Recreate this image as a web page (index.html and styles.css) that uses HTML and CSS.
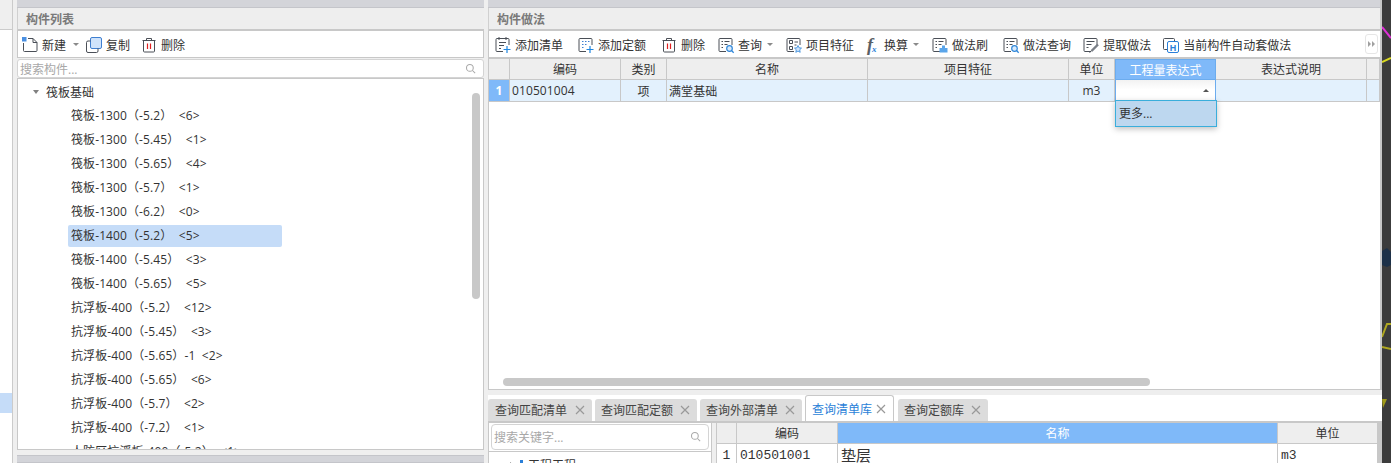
FILE: index.html
```html
<!DOCTYPE html>
<html lang="en">
<head>
    <meta charset="UTF-8">
    <meta name="viewport" content="width=device-width, initial-scale=1.0">
    <title>构件做法</title>
    <link rel="stylesheet" href="styles.css">
</head>
<body>
    <svg class="defs" width="0" height="0">
        <symbol id="i-trash" viewBox="0 0 16 16">
            <path d="M1.5 3.5h13M5.5 3.5V1.500h5v2M2.500 3.500v10.500q0 1 1 1h9q1 0 1-1V3.500" fill="none" stroke="#4a4f57"/>
            <path d="M6.500 6.500v5.500M9.500 6.500v5.500" stroke="#e02020" stroke-width="1.200"/>
        </symbol>
        <symbol id="i-sheet" viewBox="0 0 16 16">
            <path d="M8 14.500H2q-1 0-1-1v-11q0-1 1-1h11q1 0 1 1V8" fill="none" stroke="#4a4f57"/>
        </symbol>
        <symbol id="i-plus" viewBox="0 0 16 16">
            <path d="M12 9v7M8.500 12.500h7" stroke="#1f86e0" stroke-width="1.200"/>
        </symbol>
        <symbol id="i-lens" viewBox="0 0 16 16">
            <circle cx="6.500" cy="6.500" r="4.500" fill="none" stroke="#a8a8a8" stroke-width="1.400"/>
            <path d="M10 10l3.500 3.500" stroke="#a8a8a8" stroke-width="1.400"/>
        </symbol>
        <symbol id="i-close" viewBox="0 0 10 10">
            <path d="M1 1l8 8M9 1l-8 8" stroke="#999" stroke-width="1.200"/>
        </symbol>
    </svg>

    <div class="app">
        <div class="stub">
            <div class="stub-head"></div>
            <div class="stub-body"><div class="stub-sel"></div></div>
        </div>

        <section class="panel list-panel">
            <div class="strip"></div>
            <h2 class="panel-title">构件列表</h2>
            <div class="toolbar list-tools">
                <span class="tool">
                    <svg class="icon" viewBox="0 0 16 16">
                        <path d="M6 1.500h5l4 4v8q0 1-1 1H2.500q-1 0-1-1V6" fill="none" stroke="#4a4f57"/>
                        <path d="M11 1.500v4h4" fill="none" stroke="#4a4f57"/>
                        <path d="M0 0h4.500v4.500H0z" fill="#4a90e2"/>
                    </svg>
                    新建<i class="caret"></i>
                </span>
                <span class="tool">
                    <svg class="icon" viewBox="0 0 16 16">
                        <rect x="4.500" y="0.500" width="11" height="11" rx="1.500" fill="#cfe3fb" stroke="#3f7fd0"/>
                        <path d="M4.500 4H2q-1.500 0-1.500 1.500V14q0 1.500 1.500 1.500h8.500q1.500 0 1.500-1.500v-2.500" fill="none" stroke="#4a4f57"/>
                    </svg>
                    复制
                </span>
                <span class="tool"><svg class="icon"><use href="#i-trash"/></svg>删除</span>
            </div>
            <div class="search">
                <span class="placeholder">搜索构件...</span>
                <svg class="lens"><use href="#i-lens"/></svg>
            </div>
            <div class="tree">
                <div class="tree-root"><i class="caret-down"></i>筏板基础</div>
                <div class="tree-item">筏板-1300（-5.2）  &lt;6&gt;</div>
                <div class="tree-item">筏板-1300（-5.45）  &lt;1&gt;</div>
                <div class="tree-item">筏板-1300（-5.65）  &lt;4&gt;</div>
                <div class="tree-item">筏板-1300（-5.7）  &lt;1&gt;</div>
                <div class="tree-item">筏板-1300（-6.2）  &lt;0&gt;</div>
                <div class="tree-item selected">筏板-1400（-5.2）  &lt;5&gt;</div>
                <div class="tree-item">筏板-1400（-5.45）  &lt;3&gt;</div>
                <div class="tree-item">筏板-1400（-5.65）  &lt;5&gt;</div>
                <div class="tree-item">抗浮板-400（-5.2）  &lt;12&gt;</div>
                <div class="tree-item">抗浮板-400（-5.45）  &lt;3&gt;</div>
                <div class="tree-item">抗浮板-400（-5.65）-1  &lt;2&gt;</div>
                <div class="tree-item">抗浮板-400（-5.65）  &lt;6&gt;</div>
                <div class="tree-item">抗浮板-400（-5.7）  &lt;2&gt;</div>
                <div class="tree-item">抗浮板-400（-7.2）  &lt;1&gt;</div>
                <div class="tree-item">人防区抗浮板-400（-5.2）  &lt;1&gt;</div>
                <div class="vscroll"></div>
            </div>
            <div class="list-gap"></div>
            <div class="strip bottom-strip"></div>
        </section>

        <section class="panel work-panel">
            <div class="strip"></div>
            <h2 class="panel-title">构件做法</h2>
            <div class="toolbar work-tools">
                <span class="tool tool-wide">
                    <svg class="icon" viewBox="0 0 16 16">
                        <use href="#i-sheet"/><use href="#i-plus"/>
                        <path d="M4 0v3M11 0v3M4 5.500h7M4 8.500h5M4 11.500h2" stroke="#4a4f57"/>
                    </svg>
                    添加清单
                </span>
                <span class="tool tool-wide">
                    <svg class="icon" viewBox="0 0 16 16">
                        <use href="#i-sheet"/><use href="#i-plus"/>
                        <path d="M4 4.500h1.500M7 4.500h1.500M10 4.500h1.500M4 7.500h1.500M7 7.500h1.500M4 10.500h1.500" stroke="#3f7fd0"/>
                    </svg>
                    添加定额
                </span>
                <span class="tool"><svg class="icon"><use href="#i-trash"/></svg>删除</span>
                <span class="tool">
                    <svg class="icon" viewBox="0 0 16 16">
                        <use href="#i-sheet"/>
                        <path d="M3.500 4.500h1.500M6.500 4.500h5M3.500 7.500h1.500M6.500 7.500h3M3.500 10.500h1.500" stroke="#4a4f57"/>
                        <circle cx="11.500" cy="11.500" r="2.800" fill="#d9ebfd" stroke="#2f86d8" stroke-width="1.200"/>
                        <path d="M13.500 13.500l2.200 2.200" stroke="#2f86d8" stroke-width="1.300"/>
                    </svg>
                    查询<i class="caret"></i>
                </span>
                <span class="tool">
                    <svg class="icon" viewBox="0 0 16 16">
                        <use href="#i-sheet"/>
                        <path d="M3.500 3.500h3v3h-3zM3.500 9.500h3v3h-3z" fill="none" stroke="#4a4f57"/>
                        <path d="M8.500 5h3.500M8.500 8h2" stroke="#4a4f57"/>
                        <path d="M12 8.500l1.100 2.300 2.400.3-1.800 1.700.5 2.500-2.200-1.200-2.200 1.200.5-2.500-1.800-1.700 2.400-.3z" fill="#cfe3fb" stroke="#2f86d8" stroke-width=".8"/>
                    </svg>
                    项目特征
                </span>
                <span class="tool">
                    <span class="fx">f<sub>x</sub></span>
                    换算<i class="caret"></i>
                </span>
                <span class="tool tool-wide">
                    <svg class="icon" viewBox="0 0 16 16">
                        <use href="#i-sheet"/>
                        <path d="M3.500 4.500h1.500M6.500 4.500h5M3.500 7.500h1.500M6.500 7.500h3M3.500 10.500h1.500" stroke="#4a4f57"/>
                        <path d="M10 8.500h3v2.500h2.500v4.500h-8V11H10z" fill="#5aa5ea"/>
                    </svg>
                    做法刷
                </span>
                <span class="tool tool-tight">
                    <svg class="icon" viewBox="0 0 16 16">
                        <use href="#i-sheet"/>
                        <path d="M3.500 4.500h1.500M6.500 4.500h5M3.500 7.500h1.500M6.500 7.500h3M3.500 10.500h1.500" stroke="#4a4f57"/>
                        <circle cx="11.500" cy="11.500" r="2.800" fill="#d9ebfd" stroke="#2f86d8" stroke-width="1.200"/>
                        <path d="M13.500 13.500l2.200 2.200" stroke="#2f86d8" stroke-width="1.300"/>
                    </svg>
                    做法查询
                </span>
                <span class="tool tool-tight">
                    <svg class="icon" viewBox="0 0 16 16">
                        <use href="#i-sheet"/>
                        <path d="M3.500 4.500h8M3.500 7.500h5M3.500 10.500h2" stroke="#4a4f57"/>
                        <path d="M15 7.500l-6.500 6.500" stroke="#7a7f87" stroke-width="2.400"/>
                        <path d="M8.500 14l-2 1.500" stroke="#4a4f57"/>
                    </svg>
                    提取做法
                </span>
                <span class="tool">
                    <svg class="icon" viewBox="0 0 16 16">
                        <path d="M4 12.500H1.500q-1 0-1-1v-9q0-1 1-1h9q1 0 1 1V4" fill="none" stroke="#4a4f57"/>
                        <rect x="4.500" y="4.500" width="11" height="11" rx="1.500" fill="#fff" stroke="#2a7fd8"/>
                        <text class="icon-h" x="10" y="13.500">H</text>
                    </svg>
                    当前构件自动套做法
                </span>
                <span class="more-btn"><i></i><i></i></span>
            </div>

            <div class="work-grid">
                <div class="grid-row grid-head">
                    <span></span><span>编码</span><span>类别</span><span>名称</span><span>项目特征</span><span>单位</span>
                    <span class="col-active">工程量表达式</span><span>表达式说明</span><span></span>
                </div>
                <div class="grid-row grid-body">
                    <span class="row-no">1</span>
                    <span class="left">010501004</span>
                    <span>项</span>
                    <span class="left">满堂基础</span>
                    <span></span>
                    <span>m3</span>
                    <span class="cell-edit"><i class="caret-up"></i></span>
                    <span></span><span></span>
                </div>
                <div class="dropdown"><div class="dropdown-item">更多...</div></div>
                <div class="hscroll"></div>
            </div>

            <div class="tabs-bar">
                <div class="tab">查询匹配清单<svg class="tab-x"><use href="#i-close"/></svg></div>
                <div class="tab">查询匹配定额<svg class="tab-x"><use href="#i-close"/></svg></div>
                <div class="tab">查询外部清单<svg class="tab-x"><use href="#i-close"/></svg></div>
                <div class="tab active">查询清单库<svg class="tab-x"><use href="#i-close"/></svg></div>
                <div class="tab">查询定额库<svg class="tab-x"><use href="#i-close"/></svg></div>
            </div>

            <div class="lib">
                <div class="lib-tree">
                    <div class="lib-search">
                        <span class="placeholder">搜索关键字...</span>
                        <svg class="lens"><use href="#i-lens"/></svg>
                    </div>
                    <div class="lib-node"><i class="caret-right"></i><i class="node-dot"></i>工程工程</div>
                </div>
                <div class="lib-grid">
                    <div class="lib-row lib-head">
                        <span></span><span>编码</span><span class="col-active">名称</span><span>单位</span>
                    </div>
                    <div class="lib-row lib-body">
                        <span class="lib-no">1</span>
                        <span>010501001</span>
                        <span class="lib-name">垫层</span>
                        <span>m3</span>
                    </div>
                </div>
            </div>
        </section>

        <div class="canvas">
            <svg class="canvas-art" viewBox="0 0 9 463">
                <path d="M0 27L9 38" stroke="#e030d8" stroke-width="2"/>
                <path d="M0 62L9 58" stroke="#d8d820" stroke-width="2"/>
                <path d="M0 251L5 248L9 252V265L5 267L0 265z" fill="#1d3148"/>
                <path d="M0 337L5 324H9M0 347L9 349" fill="none" stroke="#b0a820" stroke-width="2"/>
                <path d="M0 399H5L1 408z" fill="#a09a18"/>
            </svg>
        </div>
    </div>
</body>
</html>
```
FILE: styles.css
```css
* {
    box-sizing: border-box;
}

html, body {
    margin: 0;
    height: 463px;
    overflow: hidden;
}

body {
    font-family: "Open Sans", "Noto Sans CJK SC", sans-serif;
    font-size: 12px;
    color: #333;
    background-color: #efefef;
    text-spacing-trim: space-all;
}

.defs {
    position: absolute;
}

.app {
    display: flex;
    height: 463px;
}

/* sliver of the panel on the far left */
.stub {
    display: flex;
    flex-direction: column;
    width: 13px;
    margin-right: 4px;
    border-right: 1px solid #cbcbcb;
}

.stub-head {
    height: 30px;
    background-color: #efefef;
    border-bottom: 1px solid #cbcbcb;
}

.stub-body {
    flex: 1;
    padding-top: 363px;
    background-color: #fff;
}

.stub-sel {
    height: 20px;
    background-color: #c5dcf8;
}

.panel {
    display: flex;
    flex-direction: column;
}

.list-panel {
    width: 467px;
    margin-right: 4px;
}

.work-panel {
    width: 894px;
    border-right: 2px solid #c8c8c8;
}

.strip {
    height: 8px;
    flex: none;
    background-color: #d3d4d9;
    border-bottom: 1px solid #c4c5ca;
}

.panel-title {
    height: 23px;
    flex: none;
    margin: 0;
    padding: 1px 0 0 8px;
    font-size: 12px;
    font-weight: bold;
    line-height: 21px;
    color: #7a7a7a;
    background-color: #eee;
    border-left: 1px solid #d0d0d0;
    border-bottom: 2px solid #c8c8c8;
}

.toolbar {
    display: flex;
    align-items: center;
    height: 27px;
    flex: none;
    padding-top: 1px;
    background-color: #fff;
    border-left: 1px solid #c8c8c8;
    border-right: 1px solid #c8c8c8;
    border-bottom: 1px solid #c8c8c8;
}

.tool {
    display: flex;
    align-items: center;
    margin-right: 13px;
    white-space: nowrap;
}

.tool-wide {
    margin-right: 15px;
}

.tool-tight {
    margin-right: 12px;
}

.icon {
    width: 16px;
    height: 16px;
    margin-right: 4px;
    overflow: visible;
}

.icon-h {
    font-family: "Liberation Sans", sans-serif;
    font-size: 9px;
    font-weight: bold;
    text-anchor: middle;
    fill: #2a7fd8;
}

.fx {
    width: 13px;
    margin: 0 4px 0 0;
    font-family: "Liberation Serif", serif;
    font-size: 18px;
    font-style: italic;
    font-weight: bold;
    line-height: 16px;
    color: #5a5f66;
}

.fx sub {
    margin-left: -1px;
    font-size: 9px;
    line-height: 0;
    vertical-align: -1px;
    color: #2a7fd8;
}

.caret {
    width: 0;
    height: 0;
    margin-left: 5px;
    border-left: 3px solid transparent;
    border-right: 3px solid transparent;
    border-top: 3px solid #8a8a8a;
}

.list-tools {
    padding-left: 4px;
}

.list-tools .tool {
    margin-right: 11px;
}

.list-tools .tool:first-child {
    margin-right: 7px;
}

.list-tools .caret {
    margin-left: 7px;
}

.work-tools {
    position: relative;
    padding-left: 6px;
    border-right: none;
}

.more-btn {
    position: absolute;
    top: 3px;
    right: 2px;
    display: flex;
    align-items: center;
    justify-content: center;
    gap: 1px;
    width: 13px;
    height: 20px;
    border: 1px solid #e6e6e6;
    border-radius: 3px;
}

.more-btn i {
    width: 0;
    height: 0;
    border-top: 3px solid transparent;
    border-bottom: 3px solid transparent;
    border-left: 3px solid #a0a0a0;
}

.search {
    display: flex;
    align-items: center;
    justify-content: space-between;
    height: 19px;
    flex: none;
    margin-top: 1px;
    padding: 0 6px 0 2px;
    background-color: #fff;
    border: 1px solid #d4d4d4;
    border-radius: 3px;
}

.placeholder {
    color: #a8a8a8;
}

.lens {
    width: 12px;
    height: 12px;
    flex: none;
}

.tree {
    position: relative;
    height: 372px;
    flex: none;
    padding-top: 1px;
    overflow: hidden;
    background-color: #fff;
    border: 1px solid #c8c8c8;
}

.tree-root {
    display: flex;
    align-items: center;
    height: 24px;
    padding-left: 15px;
}

.caret-down {
    width: 0;
    height: 0;
    margin-right: 7px;
    border-left: 3px solid transparent;
    border-right: 3px solid transparent;
    border-top: 4px solid #808080;
}

.tree-item {
    width: 214px;
    height: 24px;
    margin-left: 50px;
    padding-left: 3px;
    line-height: 24px;
    letter-spacing: 0.1px;
    white-space: pre;
}

.tree-item.selected {
    height: 22px;
    margin: 1px 0 1px 50px;
    line-height: 22px;
    background-color: #c5dcf8;
    border-radius: 2px;
}

.vscroll {
    position: absolute;
    top: 14px;
    right: 3px;
    width: 8px;
    height: 206px;
    background-color: #c8c8c8;
    border-radius: 4px;
}

.list-gap {
    height: 5px;
    flex: none;
}

.bottom-strip {
    border-top: 1px solid #c4c5ca;
}

/* upper grid */
.work-grid {
    position: relative;
    height: 332px;
    flex: none;
    background-color: #fff;
    border-left: 1px solid #c8c8c8;
    border-top: 1px solid #c8c8c8;
    border-bottom: 1px solid #c8c8c8;
}

.grid-row {
    display: grid;
    grid-template-columns: 21px 111px 46px 201px 201px 46px 101px 151px 13px;
}

.grid-row span {
    display: flex;
    align-items: center;
    justify-content: center;
    border-right: 1px solid #c8c8c8;
    border-bottom: 1px solid #c8c8c8;
}

.grid-head {
    height: 21px;
    background-color: #eee;
}

.grid-body {
    height: 22px;
    background-color: #e3f1fd;
}

.grid-row span.left {
    justify-content: flex-start;
    padding-left: 2px;
    letter-spacing: 0.1px;
}

.col-active {
    color: #fff;
    background-color: #7fb9f9;
}

.grid-row span.col-active {
    border: 1px solid #6cacee;
}

.grid-row span.row-no {
    font-weight: bold;
    color: #fff;
    background-color: #7fb9f9;
}

.grid-row span.cell-edit {
    justify-content: flex-end;
    padding-right: 6px;
    background: linear-gradient(#f2f2f2, #fff 45%);
    border-left: 1px solid #6cacee;
    border-right: 1px solid #6cacee;
}

.caret-up {
    width: 0;
    height: 0;
    border-left: 3px solid transparent;
    border-right: 3px solid transparent;
    border-bottom: 3px solid #555;
}

.dropdown {
    position: absolute;
    top: 41px;
    left: 626px;
    width: 102px;
    height: 27px;
    box-shadow: 0 2px 6px rgba(0, 0, 0, 0.25);
}

.dropdown-item {
    height: 100%;
    padding-left: 3px;
    line-height: 26px;
    background-color: #bdd7ef;
    border: 1px solid #3aaedb;
}

.hscroll {
    position: absolute;
    left: 14px;
    top: 319px;
    width: 647px;
    height: 8px;
    background-color: #c8c8c8;
    border-radius: 4px;
}

/* tabs */
.tabs-bar {
    display: flex;
    align-items: flex-end;
    height: 33px;
    flex: none;
    gap: 3px;
    padding-top: 5px;
    background: linear-gradient(#eee 5px, #fff 5px);
    border-bottom: 2px solid #c8c8c8;
    margin-right: -2px;
}

.tab {
    display: flex;
    align-items: center;
    justify-content: space-between;
    height: 22px;
    padding: 0 7px 0 6px;
    white-space: nowrap;
    color: #444;
    background-color: #dcdcdc;
    border-radius: 3px 3px 0 0;
}

.tab:nth-child(1) {
    width: 104px;
    padding-left: 7px;
}

.tab:nth-child(2),
.tab:nth-child(3) {
    width: 102px;
}

.tab-x {
    width: 10px;
    height: 10px;
    flex: none;
}

.tab.active {
    width: 89px;
    height: 26px;
    margin-right: 1px;
    color: #2a7fd8;
    background-color: #fff;
    border: 1px solid #c8c8c8;
    border-bottom: none;
}

.tab:nth-child(5) {
    width: 90px;
}

/* lower library pane */
.lib {
    display: flex;
    flex: 1;
    overflow: hidden;
}

.lib-tree {
    width: 224px;
    flex: none;
    background-color: #fff;
    border-left: 1px solid #c8c8c8;
    border-right: 1px solid #c8c8c8;
}

.lib-search {
    display: flex;
    align-items: center;
    justify-content: space-between;
    height: 26px;
    margin: 1px 2px 0;
    padding: 0 6px 0 2px;
    border: 1px solid #d4d4d4;
    border-radius: 4px;
}

.lib-node {
    display: flex;
    align-items: center;
    height: 24px;
    margin: 1px 0 0 -1px;
    padding: 3px 0 0 22px;
    border-top: 1px solid #c8c8c8;
}

.caret-right {
    width: 0;
    height: 0;
    margin-right: 6px;
    border-top: 3px solid transparent;
    border-bottom: 3px solid transparent;
    border-left: 4px solid #808080;
}

.node-dot {
    width: 3px;
    height: 10px;
    margin-right: 5px;
    background-color: #2a7fd8;
}

.lib-grid {
    flex: 1;
    margin-left: 4px;
    font-family: "Liberation Mono", "Noto Sans CJK SC", monospace;
    border-left: 1px solid #c8c8c8;
    border-right: 2px solid #c8c8c8;
    background-color: #fff;
}

.lib-row {
    display: grid;
    grid-template-columns: 20px 101px 440px 100px;
}

.lib-row span {
    display: flex;
    align-items: center;
    border-right: 1px solid #c8c8c8;
    border-bottom: 1px solid #c8c8c8;
}

.lib-head {
    height: 21px;
    font-family: "Open Sans", "Noto Sans CJK SC", sans-serif;
    background-color: #eee;
}

.lib-head span {
    justify-content: center;
}

.lib-body {
    height: 19px;
    font-size: 13px;
}

.lib-body span {
    padding-left: 3px;
    border-bottom: none;
}

.lib-row span.lib-no {
    justify-content: center;
    padding-left: 0;
}

.lib-name {
    font-size: 15px;
}

.canvas {
    flex: 1;
    position: relative;
    overflow: hidden;
    background-color: #3c3c3c;
}

.canvas-art {
    position: absolute;
    left: 0;
    top: 0;
    width: 9px;
    height: 463px;
}
```
